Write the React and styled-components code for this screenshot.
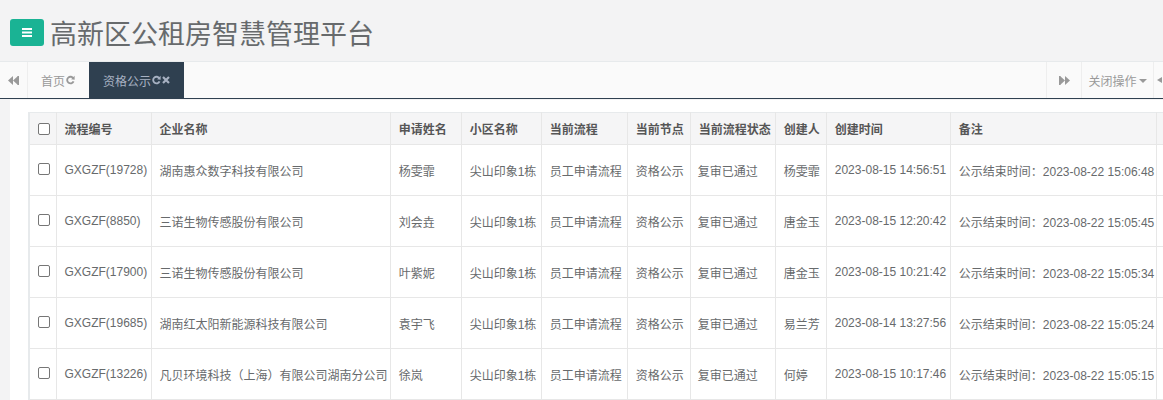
import React from "react";
import styled, { createGlobalStyle } from "styled-components";

const GlobalStyle = createGlobalStyle`
  html, body {
    margin: 0;
    padding: 0;
    background: #f3f3f4;
    overflow: hidden;
  }
  body {
    font-family: "Liberation Sans", Arial, "Noto Sans CJK SC", sans-serif;
    font-size: 12px;
    color: #676a6c;
  }
`;

const Page = styled.div`
  width: 1163px;
  height: 400px;
  display: flex;
  flex-direction: column;
  overflow: hidden;
`;

const Header = styled.div`
  height: 61px;
  display: flex;
  align-items: center;
  gap: 6px;
  padding-left: 10px;
  box-sizing: border-box;
  padding-top: 4px;
`;

const MenuButton = styled.button`
  width: 34px;
  height: 27px;
  border: none;
  border-radius: 3px;
  background: #1ab394;
  display: flex;
  align-items: center;
  justify-content: center;
  padding: 0;
`;

const Title = styled.h1`
  margin: 0;
  font-family: "Noto Sans CJK SC", sans-serif;
  font-weight: 400;
  font-size: 27px;
  line-height: 34px;
  color: #676a6c;
`;

const TabBar = styled.div`
  height: 36px;
  display: flex;
  background: #fafafa;
  border-top: 1px solid #e7eaec;
  border-bottom: 1px solid #2f4050;
  box-sizing: content-box;
`;

const NavArrow = styled.div`
  width: ${(p) => p.w}px;
  display: flex;
  align-items: center;
  justify-content: center;
  border-right: ${(p) => (p.left ? "1px solid #eee" : "none")};
  border-left: ${(p) => (p.left ? "none" : "1px solid #eee")};
  color: #999;
`;

const TabList = styled.div`
  flex: 1;
  display: flex;
`;

const Tab = styled.div`
  display: flex;
  align-items: center;
  gap: 1px;
  padding: 0 14px 0 ${(p) => (p.active ? "14px" : "13px")};
  background: ${(p) => (p.active ? "#2f4050" : "transparent")};
  color: ${(p) => (p.active ? "#a7b1c2" : "#999")};
  font-family: "Noto Sans CJK SC", sans-serif;
  font-size: 12px;
`;

const CloseMenu = styled.div`
  width: 71px;
  display: flex;
  align-items: center;
  justify-content: center;
  gap: 2px;
  border-left: 1px solid #eee;
  color: #999;
  font-family: "Noto Sans CJK SC", sans-serif;
  font-size: 12px;
`;

const Caret = styled.span`
  width: 0;
  height: 0;
  border-left: 4px solid transparent;
  border-right: 4px solid transparent;
  border-top: 4px solid #999;
  margin-top: 1px;
`;

const ExitStub = styled.div`
  width: 6px;
  border-left: 1px solid #eee;
  display: flex;
  align-items: center;
  padding-left: 3px;
  color: #999;
`;

const Content = styled.div`
  flex: 1;
  padding: 1px 0 0 10px;
  overflow: hidden;
`;

const Panel = styled.div`
  background: #fff;
  height: 100%;
  padding: 12px 0 0 18px;
  overflow: hidden;
`;

const Table = styled.table`
  table-layout: fixed;
  width: 1211px;
  border-collapse: collapse;
  border-left: 2px solid #e7eaec;
  border-top: 1px solid #e7eaec;
`;

const HeadCell = styled.th`
  height: 31px;
  padding: 0 8px;
  text-align: left;
  font-weight: 700;
  color: #565656;
  background: #f5f5f6;
  border: 1px solid #e7e7e7;
  border-top: none;
  white-space: nowrap;
  overflow: hidden;
  font-family: "Noto Sans CJK SC", sans-serif;
`;

const Cell = styled.td`
  height: 50px;
  padding: 0 ${(p) => (p.tight ? "7px" : "8px")};
  color: #676a6c;
  border: 1px solid #e7e7e7;
  white-space: nowrap;
  overflow: hidden;
  vertical-align: middle;
`;

const Check = styled.span`
  display: block;
  width: 10px;
  height: 10px;
  border: 1px solid #767676;
  border-radius: 2px;
  background: #fff;
  margin: ${(p) => (p.head ? "0" : "-3px 0 0 0")};
`;

const Backward = ({ flip }) => (
  <svg
    width="11"
    height="9"
    viewBox="0 0 11 9"
    style={flip ? { transform: "scaleX(-1)" } : undefined}
  >
    <polygon points="5,0 5,9 0,4.5" fill="#999" />
    <polygon points="10,0 10,9 5,4.5" fill="#999" />
    <rect x="9.6" y="0" width="1.4" height="9" fill="#999" />
  </svg>
);

const Refresh = ({ color }) => (
  <svg width="9" height="10" viewBox="0 0 10 10">
    <path
      d="M8.2 3.2 A3.7 3.7 0 1 0 8.4 6.6"
      fill="none"
      stroke={color}
      strokeWidth="2.1"
    />
    <polygon points="9.6,0.4 9.6,4.6 5.6,4.2" fill={color} />
  </svg>
);

const Times = ({ color }) => (
  <svg width="8" height="8" viewBox="0 0 8 8">
    <path d="M1 1 L7 7 M7 1 L1 7" stroke={color} strokeWidth="2.2" />
  </svg>
);

const columns = [
  { w: 27 },
  { w: 95, label: "流程编号" },
  { w: 239, label: "企业名称" },
  { w: 71, label: "申请姓名" },
  { w: 80, label: "小区名称" },
  { w: 86, label: "当前流程" },
  { w: 63, label: "当前节点" },
  { w: 85, label: "当前流程状态" },
  { w: 51, label: "创建人" },
  { w: 124, label: "创建时间" },
  { w: 206, label: "备注" },
  { w: 82, label: "" },
];

const rows = [
  ["GXGZF(19728)", "湖南惠众数字科技有限公司", "杨雯霏", "杨雯霏", "2023-08-15 14:56:51", "2023-08-22 15:06:48"],
  ["GXGZF(8850)", "三诺生物传感股份有限公司", "刘会垚", "唐金玉", "2023-08-15 12:20:42", "2023-08-22 15:05:45"],
  ["GXGZF(17900)", "三诺生物传感股份有限公司", "叶紫妮", "唐金玉", "2023-08-15 10:21:42", "2023-08-22 15:05:34"],
  ["GXGZF(19685)", "湖南红太阳新能源科技有限公司", "袁宇飞", "易兰芳", "2023-08-14 13:27:56", "2023-08-22 15:05:24"],
  ["GXGZF(13226)", "凡贝环境科技（上海）有限公司湖南分公司", "徐岚", "何婷", "2023-08-15 10:17:46", "2023-08-22 15:05:15"],
];

const App = () => {
  return (
    <Page>
      <GlobalStyle />
      <Header>
        <MenuButton>
          <svg width="10" height="9" viewBox="0 0 10 9">
            <rect x="0" y="0" width="10" height="2" fill="#fff" />
            <rect x="0" y="3.5" width="10" height="2" fill="#fff" />
            <rect x="0" y="7" width="10" height="2" fill="#fff" />
          </svg>
        </MenuButton>
        <Title>高新区公租房智慧管理平台</Title>
      </Header>
      <TabBar>
        <NavArrow left w={27}>
          <Backward />
        </NavArrow>
        <TabList>
          <Tab>
            首页
            <Refresh color="#999" />
          </Tab>
          <Tab active>
            资格公示
            <Refresh color="#a7b1c2" />
            <Times color="#a7b1c2" />
          </Tab>
        </TabList>
        <NavArrow w={34}>
          <Backward flip />
        </NavArrow>
        <CloseMenu>
          关闭操作
          <Caret />
        </CloseMenu>
        <ExitStub>
          <svg width="5" height="6" viewBox="0 0 5 6">
            <polygon points="5,0 5,6 0,3" fill="#999" />
          </svg>
        </ExitStub>
      </TabBar>
      <Content>
        <Panel>
          <Table>
            <colgroup>
              {columns.map((c, i) => (
                <col key={i} style={{ width: c.w }} />
              ))}
            </colgroup>
            <thead>
              <tr>
                <HeadCell>
                  <Check head />
                </HeadCell>
                {columns.slice(1).map((c, i) => (
                  <HeadCell key={i}>{c.label}</HeadCell>
                ))}
              </tr>
            </thead>
            <tbody>
              {rows.map((r, i) => (
                <tr key={i}>
                  <Cell>
                    <Check />
                  </Cell>
                  <Cell>{r[0]}</Cell>
                  <Cell>{r[1]}</Cell>
                  <Cell>{r[2]}</Cell>
                  <Cell>尖山印象1栋</Cell>
                  <Cell>员工申请流程</Cell>
                  <Cell>资格公示</Cell>
                  <Cell tight>复审已通过</Cell>
                  <Cell>{r[3]}</Cell>
                  <Cell>{r[4]}</Cell>
                  <Cell>公示结束时间：{r[5]}</Cell>
                  <Cell />
                </tr>
              ))}
            </tbody>
          </Table>
        </Panel>
      </Content>
    </Page>
  );
};

export default App;
